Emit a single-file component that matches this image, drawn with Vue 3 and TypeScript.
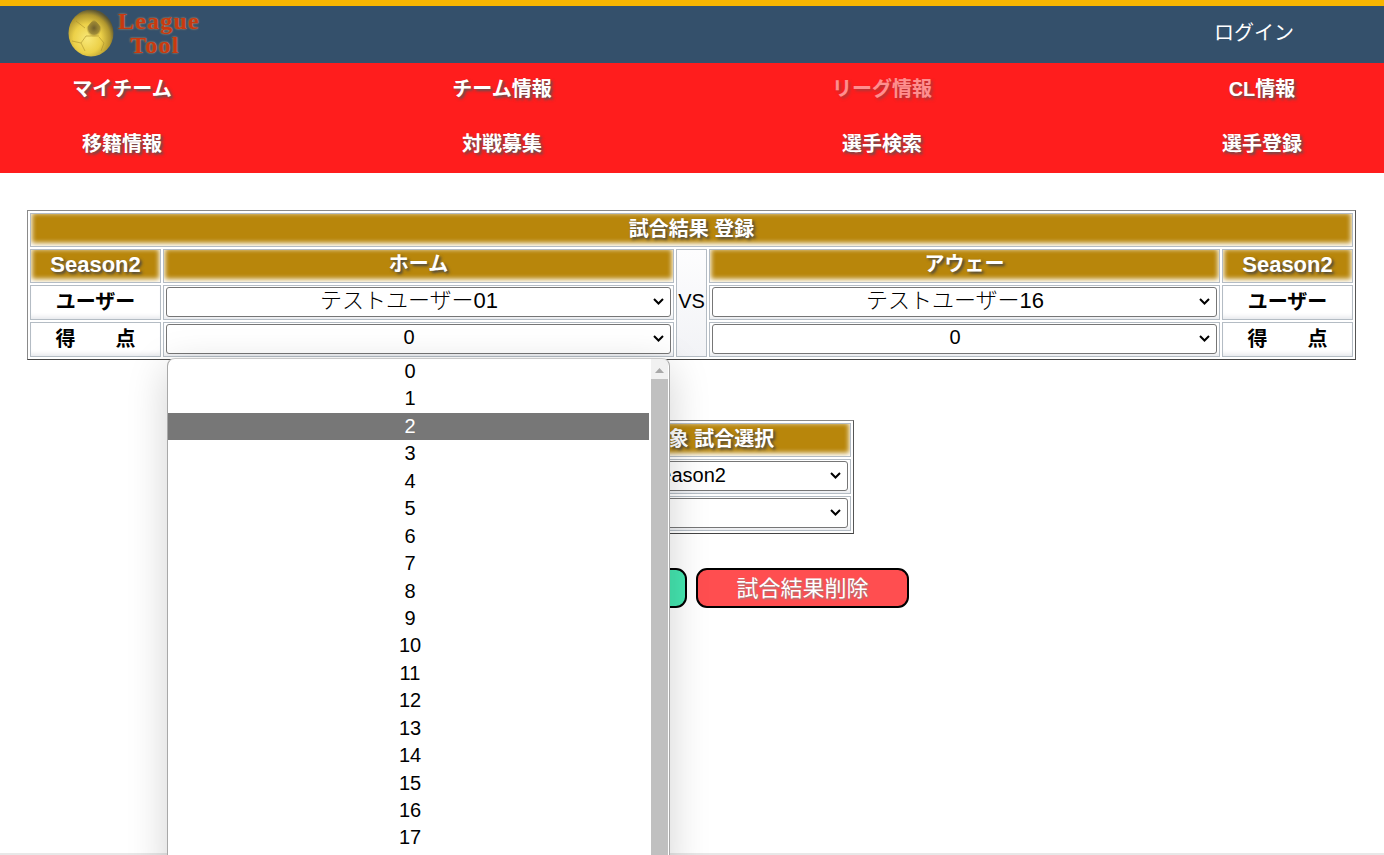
<script setup lang="ts">
const navItems: { label: string; faded?: boolean }[] = [
  { label: 'マイチーム' },
  { label: 'チーム情報' },
  { label: 'リーグ情報', faded: true },
  { label: 'CL情報' },
  { label: '移籍情報' },
  { label: '対戦募集' },
  { label: '選手検索' },
  { label: '選手登録' },
]
const scores: number[] = Array.from({ length: 18 }, (_, i) => i)
</script>

<template>
  <div class="page">
    <header class="top">
      <div class="logo">
        <svg class="ball" width="46" height="48" viewBox="0 0 46 48">
          <defs>
            <radialGradient id="gold" cx="0.42" cy="0.62" r="0.62">
              <stop offset="0" stop-color="#f8e878" />
              <stop offset="0.5" stop-color="#ecd048" />
              <stop offset="0.82" stop-color="#b0962e" />
              <stop offset="1" stop-color="#5a5534" />
            </radialGradient>
            <radialGradient id="spot" cx="0.5" cy="0.5" r="0.5">
              <stop offset="0" stop-color="#6f5f2c" />
              <stop offset="0.7" stop-color="#8d7a30" stop-opacity="0.8" />
              <stop offset="1" stop-color="#c9ad3c" stop-opacity="0" />
            </radialGradient>
          </defs>
          <ellipse cx="23" cy="24" rx="22.5" ry="23.5" fill="url(#gold)" />
          <path d="M26 10l8 9-3 9H21l-3-9z" fill="url(#spot)" />
          <path d="M18 27l-5 7 4 8M31 28l5 6-3 8M13 34l-9-2M18 27h13M8 12l9 7" fill="none" stroke="#a68a2a" stroke-width="0.8" opacity="0.7" />
        </svg>
        <div class="logo-text"><span>League</span><span class="tool">Tool</span></div>
      </div>
      <a class="login">ログイン</a>
    </header>

    <nav class="nav">
      <a v-for="item in navItems" :key="item.label" class="nav-item" :class="{ faded: item.faded }">{{ item.label }}</a>
    </nav>

    <main class="main">
      <table class="result">
        <colgroup>
          <col class="c-side" />
          <col />
          <col class="c-vs" />
          <col />
          <col class="c-side" />
        </colgroup>
        <tbody>
          <tr>
            <th colspan="5" class="gold title-row">試合結果 登録</th>
          </tr>
          <tr class="heads">
            <th class="gold">Season2</th>
            <th class="gold jp">ホーム</th>
            <td rowspan="3" class="vs">VS</td>
            <th class="gold jp">アウェー</th>
            <th class="gold">Season2</th>
          </tr>
          <tr>
            <td class="label">ユーザー</td>
            <td class="field"><select class="sel name"><option>テストユーザー01</option></select></td>
            <td class="field"><select class="sel name"><option>テストユーザー16</option></select></td>
            <td class="label">ユーザー</td>
          </tr>
          <tr>
            <td class="label spaced"><span>得</span><span>点</span></td>
            <td class="field"><select class="sel"><option>0</option></select></td>
            <td class="field"><select class="sel"><option>0</option></select></td>
            <td class="label spaced"><span>得</span><span>点</span></td>
          </tr>
        </tbody>
      </table>

      <table class="target">
        <tbody>
          <tr><th class="gold title-row">修正対象 試合選択</th></tr>
          <tr><td class="field"><select class="sel wide"><option>Season2</option></select></td></tr>
          <tr><td class="field"><select class="sel wide"><option></option></select></td></tr>
        </tbody>
      </table>

      <div class="actions">
        <button class="btn green">試合結果登録</button>
        <button class="btn red">試合結果削除</button>
      </div>

      <div class="dropdown">
        <ul class="opts">
          <li v-for="n in scores" :key="n" :class="{ hl: n === 2 }">{{ n }}</li>
        </ul>
        <div class="scroll">
          <svg width="17" height="20" viewBox="0 0 17 20"><path d="M8.5 9l4.5 5H4z" fill="#a8a8a8" /></svg>
        </div>
      </div>
    </main>
    <div class="edge"></div>
  </div>
</template>

<style>
html, body { margin: 0; overflow: hidden; }
</style>

<style scoped>
.page {
  position: relative;
  height: 855px;
  overflow: hidden;
  background: #fff;
  color: #000;
  font-family: "Liberation Sans", "Noto Sans CJK JP", sans-serif;
  font-size: 20px;
}
.top {
  height: 57px;
  border-top: 6px solid #f8b500;
  background: #34506b;
  display: flex;
  align-items: center;
  justify-content: space-between;
  padding: 0 90px 0 68px;
}
.logo { display: flex; align-items: center; gap: 3px; height: 57px; }
.ball { flex: none; margin-top: -4px; }
.logo-text {
  display: flex;
  flex-direction: column;
  align-items: center;
  width: 84px;
  font-family: "Liberation Serif", serif;
  font-weight: 700;
  font-size: 24px;
  line-height: 24px;
  letter-spacing: 1.2px;
  color: #c8390f;
  text-shadow: 0 0 2px #e8a868;
  margin-top: -3px;
}
.tool { margin-right: 8px; }
.login { color: #fff; margin-top: -6px; }
.nav {
  background: #ff1d1d;
  display: grid;
  grid-template-columns: repeat(4, 380px);
  grid-auto-rows: 55px;
  justify-content: center;
  height: 110px;
}
.nav-item {
  display: flex;
  align-items: center;
  justify-content: center;
  padding-bottom: 6px;
  box-sizing: border-box;
  color: #fff;
  font-weight: 700;
  text-shadow: 2px 2px 3px #555;
}
.nav-item.faded { opacity: 0.5; }
.main {
  position: relative;
  padding: 37px 28px 0 27px;
}
table { border-collapse: separate; border-spacing: 2px; }
.result, .target {
  border: 1px solid;
  border-color: #8a8a8a #555 #444 #8a8a8a;
}
.result { width: 1329px; table-layout: fixed; }
.c-side { width: 131px; }
.c-vs { width: 31px; }
th, td {
  padding: 0;
  box-sizing: border-box;
  border: 1px solid #b4bcc4;
  text-align: center;
}
.gold {
  background: #b8860b;
  box-shadow: inset 0 -2px 5px 1px #fff;
  color: #fff;
  font-weight: 700;
  font-size: 22px;
  line-height: 24px;
  height: 34px;
  padding-bottom: 3px;
  text-shadow: 2px 2px 3px #444;
}
.gold.jp { font-size: 20px; padding-bottom: 4px; }
.gold.title-row { font-size: 20px; padding-bottom: 3px; }
.label {
  height: 35px;
  line-height: 24px;
  padding-bottom: 2px;
  font-weight: 700;
  box-shadow: inset 0 -5px 5px -3px #e4e6ea;
}
.spaced span { display: inline-block; }
.spaced span + span { margin-left: 40px; }
.field { height: 35px; padding: 1px 2px 2px; box-shadow: inset 0 -5px 5px -3px #e4e6ea; }
.vs {
  padding-bottom: 4px;
  background: linear-gradient(#fdfdfe, #f2f3f6);
}
.sel {
  display: block;
  width: 100%;
  height: 30px;
  box-sizing: border-box;
  padding: 0 20px 4px 1px;
  border: 1px solid #767676;
  border-radius: 3px;
  appearance: none;
  background: #fff url("data:image/svg+xml,%3Csvg xmlns='http://www.w3.org/2000/svg' width='11' height='7' viewBox='0 0 11 7'%3E%3Cpath d='M1 1l4.5 4.5L10 1' fill='none' stroke='%23000' stroke-width='2'/%3E%3C/svg%3E") no-repeat right 6px top 10px;
  color: #000;
  font: 20px "Liberation Sans", "Noto Sans CJK JP", sans-serif;
  text-align: center;
  text-align-last: center;
}
.sel.name { font-size: 22px; font-weight: 300; }
.sel.wide { padding: 0 10px 2px 0; }
.target {
  width: 325px;
  margin: 60px auto 0;
}
.actions {
  display: flex;
  justify-content: center;
  gap: 9px;
  margin-top: 34px;
}
.btn {
  width: 213px;
  height: 40px;
  box-sizing: border-box;
  border: 2px solid #000;
  border-radius: 11px;
  color: #fff;
  font: 22px "Liberation Sans", "Noto Sans CJK JP", sans-serif;
  text-shadow: 1px 1px 2px #888;
  padding: 0 0 8px;
}
.green { background: #45e6b0; }
.red { background: #ff4e50; }
.dropdown {
  position: absolute;
  z-index: 2;
  left: 167px;
  top: 185px;
  width: 503px;
  height: 520px;
  box-sizing: border-box;
  background: #fff;
  border-left: 1px solid #a8a8a8;
  border-right: 1px solid #a8a8a8;
  border-top: 1px solid #c8c8c8;
  border-radius: 8px 8px 0 0;
  box-shadow: 0 10px 40px rgba(0, 0, 0, 0.18);
  display: flex;
  overflow: hidden;
}
.opts {
  list-style: none;
  margin: -1px 0 0;
  padding: 0;
  width: 481px;
  flex: none;
}
.opts li {
  box-sizing: border-box;
  padding-left: 3px;
  height: 27.45px;
  line-height: 27.45px;
  text-align: center;
}
.opts li.hl { background: #777; color: #fff; }
.scroll {
  margin-left: 2px;
  width: 17px;
  background: #c0c0c0;
}
.scroll svg { display: block; background: #f1f1f1; }
.edge {
  position: absolute;
  z-index: 1;
  left: 0;
  right: 0;
  bottom: 0;
  height: 2px;
  background: #e8e8e8;
}
</style>
